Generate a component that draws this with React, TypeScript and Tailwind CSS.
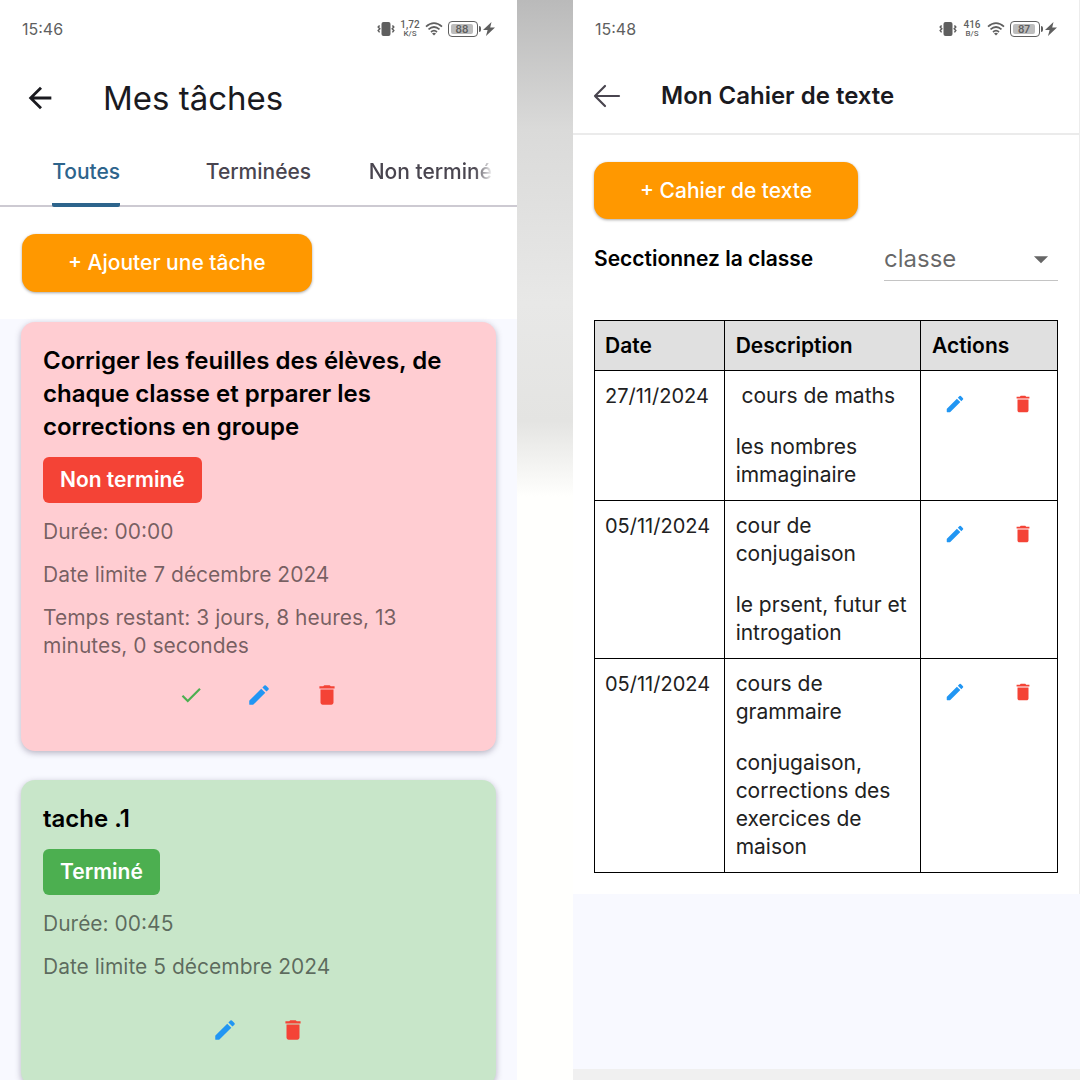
import React, { useState } from 'react';
import { MdArrowBack, MdArrowDropDown, MdCheck, MdDelete } from 'react-icons/md';

interface Task {
  id:        number;
  title:     string;
  completed: boolean;
  duration:  string;
  deadline:  string;
  remaining: string | null;
}

interface Entry {
  id:      number;
  date:    string;
  subject: string;
  content: string;
}

const initialTasks: Task[] = [
  {
    id:        1,
    title:     'Corriger les feuilles des élèves, de chaque classe et prparer les corrections en groupe',
    completed: false,
    duration:  '00:00',
    deadline:  '7 décembre 2024',
    remaining: '3 jours, 8 heures, 13 minutes, 0 secondes',
  },
  {
    id:        2,
    title:     'tache .1',
    completed: true,
    duration:  '00:45',
    deadline:  '5 décembre 2024',
    remaining: null,
  },
];

const initialEntries: Entry[] = [
  { id: 1, date: '27/11/2024', subject: ' cours de maths', content: 'les nombres immaginaire' },
  { id: 2, date: '05/11/2024', subject: 'cour de conjugaison', content: 'le prsent, futur et introgation' },
  { id: 3, date: '05/11/2024', subject: 'cours de grammaire', content: 'conjugaison, corrections des exercices de maison' },
];

const tabs = ['Toutes', 'Terminées', 'Non terminées'];

function PencilIcon({ size }: { size: number }) {
  return (
    <svg width={size} height={size} viewBox="0 0 24 24" fill="currentColor" aria-hidden="true">
      <path d="M3 17.46v3.04c0 .28.22.5.5.5h3.04c.13 0 .26-.05.35-.15L17.81 9.94l-3.75-3.75L3.15 17.1c-.1.1-.15.22-.15.36zM20.71 7.04a1 1 0 0 0 0-1.41l-2.34-2.34a1 1 0 0 0-1.41 0l-1.83 1.83 3.75 3.75 1.83-1.83z" />
    </svg>
  );
}

function StatusBar({ time, rate, unit, battery }: { time: string; rate: string; unit: string; battery: string }) {
  return (
    <div className="flex h-[58px] items-center justify-between px-[22px] text-[#5f5f5f]">
      <span className="text-base">{time}</span>
      <div className="flex items-center gap-[5px]">
        {/* Vibreur */}
        <svg width="18" height="14" viewBox="0 0 18 14" fill="none" stroke="currentColor" strokeWidth="1.5" aria-hidden="true">
          <rect x="4.5" y="0" width="9" height="14" rx="2" fill="currentColor" stroke="none" />
          <path d="M2.6 3.4 1.2 5 2.8 6.8 1.2 8.6 2.6 10.4M15.4 3.4 16.8 5 15.2 6.8 16.8 8.6 15.4 10.4" />
        </svg>
        <span className="flex w-5 flex-col items-center font-['Roboto',sans-serif] font-medium">
          <span className="text-[10px] leading-[9px]">{rate}</span>
          <span className="text-[8px] leading-[9px]">{unit}</span>
        </span>
        <svg width="18" height="14" viewBox="0 0 18 14" fill="none" stroke="currentColor" strokeWidth="1.7" aria-hidden="true">
          <path d="M1 4.6Q9-2.4 17 4.6M3.5 7.4Q9 2.6 14.5 7.4M6 10Q9 7.4 12 10" />
          <path d="M7 11.4Q9 10 11 11.4L9 13.6z" fill="currentColor" stroke="none" />
        </svg>
        <span className="flex items-center gap-px">
          <span className="flex h-4 w-[30px] rounded-sm border border-current p-[2px]">
            <span className="flex w-[22px] items-center justify-center rounded-xs bg-[#bdbdbd] text-[10px] font-semibold leading-none">
              {battery}
            </span>
          </span>
          <span className="h-1.5 w-0.5 rounded-r-xs bg-[#5f5f5f]" />
          <svg width="12" height="14" viewBox="0 0 12 14" fill="currentColor" className="ml-px" aria-hidden="true">
            <path d="M8.5 0 0 8h4.6L3 14 12 5.6H7.2z" />
          </svg>
        </span>
      </div>
    </div>
  );
}

function TaskCard({ task, onComplete, onDelete }: { task: Task; onComplete: () => void; onDelete: () => void }) {
  return (
    <article
      className={`rounded-[14px] px-[22px] pb-[21px] pt-[22px] shadow-[0_2px_6px_rgba(60,50,80,0.35)]
        ${task.completed ? 'bg-[#c8e6c9]' : 'bg-[#ffcdd2]'}`}
    >
      <h2 className="text-2xl font-semibold leading-[33px] text-black">{task.title}</h2>
      <div
        className={`mt-[14px] flex h-[46px] w-fit items-center rounded-md px-[17px] text-[21px] font-semibold text-white
          ${task.completed ? 'bg-[#4caf50]' : 'bg-[#f44336]'}`}
      >
        {task.completed ? 'Terminé' : 'Non terminé'}
      </div>
      <div className="mt-[15px] flex flex-col gap-[15px] text-[21px] leading-7 text-black/55">
        <p>{`Durée: ${task.duration}`}</p>
        <p>{`Date limite ${task.deadline}`}</p>
        {task.remaining && <p>{`Temps restant: ${task.remaining}`}</p>}
      </div>
      <div className={`flex h-[70px] items-center justify-center gap-[42px] ${task.completed ? 'mt-[14px]' : ''}`}>
        {!task.completed && (
          <button onClick={onComplete} aria-label="Terminer" className="text-[#4caf50]">
            <MdCheck size={26} />
          </button>
        )}
        <button aria-label="Modifier" className="text-[#2196f3]">
          <PencilIcon size={26} />
        </button>
        <button onClick={onDelete} aria-label="Supprimer" className="text-[#f44336]">
          <MdDelete size={26} />
        </button>
      </div>
    </article>
  );
}

function TasksScreen() {
  const [tasks, setTasks] = useState<Task[]>(initialTasks);
  const [activeTab, setActiveTab] = useState('Toutes');

  const completeTask = (id: number) =>
    setTasks(prev => prev.map(t => t.id === id ? { ...t, completed: true } : t));

  const deleteTask = (id: number) =>
    setTasks(prev => prev.filter(t => t.id !== id));

  const visibleTasks = tasks.filter(t =>
    activeTab === 'Toutes' || (activeTab === 'Terminées' ? t.completed : !t.completed)
  );

  return (
    <section className="min-w-0 overflow-hidden bg-[#f8f9ff]">
      <div className="bg-white pb-[27px]">
        <StatusBar time="15:46" rate="1,72" unit="K/S" battery="88" />

        <header className="flex h-20 items-center gap-[46px] pl-[23px] text-[#1a1a1f]">
          <button aria-label="Retour"><MdArrowBack size={34} /></button>
          <h1 className="text-[33px] leading-10">Mes tâches</h1>
        </header>

        {/* ONGLETS */}
        <nav className="grid h-[69px] grid-cols-3 shadow-[inset_0_-2px_0_#cdcad2]">
          {tabs.map(tab => (
            <button
              key={tab}
              onClick={() => setActiveTab(tab)}
              className={`flex min-w-0 justify-center px-6 text-[21px] font-medium
                ${tab === activeTab ? 'text-[#2d648c]' : 'text-[#49454f]'}`}
            >
              <span
                className={`flex h-full max-w-full items-center overflow-hidden whitespace-nowrap border-b-4 pt-[2px]
                  ${tab === activeTab ? 'rounded-xs border-[#2d648c]' : 'border-transparent'}
                  ${tab === 'Non terminées' ? 'mask-r-from-85%' : ''}`}
              >
                {tab}
              </span>
            </button>
          ))}
        </nav>

        <button className="ml-[22px] mt-[27px] h-[58px] rounded-[14px] bg-[#ff9800] px-[46px] text-[21px] font-medium text-white shadow-[0_1px_3px_rgba(0,0,0,0.35)]">
          + Ajouter une tâche
        </button>
      </div>

      {/* LISTE */}
      <div className="flex flex-col gap-[29px] px-[21px] pt-[3px]">
        {visibleTasks.map(task => (
          <TaskCard
            key={task.id}
            task={task}
            onComplete={() => completeTask(task.id)}
            onDelete={() => deleteTask(task.id)}
          />
        ))}
      </div>
    </section>
  );
}

function NotebookScreen() {
  const [entries, setEntries] = useState<Entry[]>(initialEntries);

  const deleteEntry = (id: number) =>
    setEntries(prev => prev.filter(e => e.id !== id));

  return (
    <section className="flex min-w-0 flex-col overflow-hidden bg-[#f8f9ff]">
      <div className="border-r border-[#ececec] bg-white pb-[21px]">
        <StatusBar time="15:48" rate="416" unit="B/S" battery="87" />

        <header className="flex h-[77px] items-center gap-10 border-b-2 border-[#ebebeb] pl-5 text-[#1a1a1f]">
          <button aria-label="Retour" className="text-[#49454f]">
            <svg width="28" height="24" viewBox="0 0 28 24" fill="none" stroke="currentColor" strokeWidth="2.2" strokeLinecap="round" strokeLinejoin="round" aria-hidden="true">
              <path d="M26 12H2M12 2 2 12l10 10" />
            </svg>
          </button>
          <h1 className="text-2xl font-semibold">Mon Cahier de texte</h1>
        </header>

        <div className="px-[21px] pt-[27px]">
          <button className="h-[57px] rounded-[14px] bg-[#ff9800] px-[46px] text-[21px] font-medium text-white shadow-[0_1px_3px_rgba(0,0,0,0.35)]">
            + Cahier de texte
          </button>

          <div className="mt-[18px] flex h-11 items-center justify-between">
            <label htmlFor="classe" className="text-[21px] font-semibold text-black">Secctionnez la classe</label>
            <div className="relative w-[174px]">
              <select
                id="classe"
                className="h-11 w-full appearance-none border-b border-[#c4c4c4] bg-transparent text-2xl text-black/60 outline-none"
              >
                <option>classe</option>
              </select>
              <MdArrowDropDown size={34} className="pointer-events-none absolute right-0 top-[5px] text-[#666666]" />
            </div>
          </div>

          {/* TABLEAU */}
          <table className="mt-[39px] w-full table-fixed border-collapse text-left align-top text-[21px] leading-7 text-[#212121]">
            <colgroup>
              <col className="w-[28%]" />
              <col />
              <col className="w-[137px]" />
            </colgroup>
            <thead>
              <tr className="bg-[#e0e0e0] text-black">
                <th className="border border-black px-[10px] pb-[10px] pt-[11px] font-semibold">Date</th>
                <th className="border border-black px-[11px] pb-[10px] pt-[11px] font-semibold">Description</th>
                <th className="border border-black px-[11px] pb-[10px] pt-[11px] font-semibold">Actions</th>
              </tr>
            </thead>
            <tbody>
              {entries.map(entry => (
                <tr key={entry.id} className="align-top">
                  <td className="border border-black px-[10px] py-[11px] text-xl leading-7">{entry.date}</td>
                  <td className="border border-black px-[11px] py-[11px]">
                    <p className="whitespace-pre-wrap">{entry.subject}</p>
                    <p className="mt-[23px]">{entry.content}</p>
                  </td>
                  <td className="border border-black">
                    <div className="flex items-center justify-around pt-[22px]">
                      <button aria-label="Modifier" className="text-[#2196f3]">
                        <PencilIcon size={22} />
                      </button>
                      <button onClick={() => deleteEntry(entry.id)} aria-label="Supprimer" className="text-[#f44336]">
                        <MdDelete size={22} />
                      </button>
                    </div>
                  </td>
                </tr>
              ))}
            </tbody>
          </table>
        </div>
      </div>
      <div className="mt-auto h-[11px] bg-[#f0f0f0]" />
    </section>
  );
}

export default function App() {
  return (
    <main className="grid h-screen grid-cols-[517fr_56fr_507fr] overflow-hidden font-['Inter','Open_Sans',sans-serif]">
      <TasksScreen />
      <div className="bg-[linear-gradient(to_bottom,#bababa_0%,#dadad9_12%,#e8e8e7_28%,#e4e4e2_39%,#fffffd_46%)]" />
      <NotebookScreen />
    </main>
  );
}
